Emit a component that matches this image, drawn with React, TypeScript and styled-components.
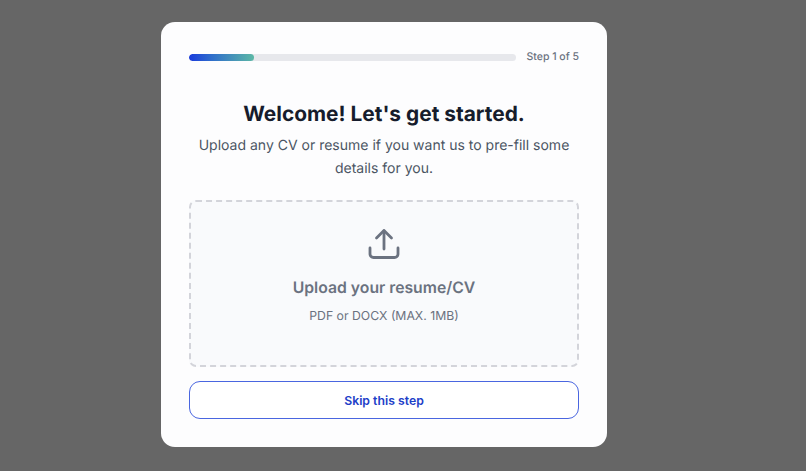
import React from "react";
import styled, { createGlobalStyle } from "styled-components";

const Global = createGlobalStyle`
  html, body { margin: 0; padding: 0; height: 100%; background: #666666; }
  body { font-family: Inter, "Liberation Sans", sans-serif; text-rendering: geometricPrecision; overflow: hidden; }
`;

const Page = styled.div`
  width: 768px;
  height: 471px;
  background: #666666;
  display: flex;
  justify-content: center;
  padding-top: 22px;
  box-sizing: border-box;
`;

const Card = styled.main`
  width: 446px;
  height: 425px;
  box-sizing: border-box;
  background: #fdfdfe;
  border-radius: 14px;
  padding: 28px;
  display: flex;
  flex-direction: column;
`;

const ProgressRow = styled.div`
  display: flex;
  align-items: center;
  gap: 11px;
  height: 14px;
`;

const Track = styled.div`
  flex: 1;
  height: 7px;
  border-radius: 4px;
  background: #e7e8ec;
  overflow: hidden;
`;

const Fill = styled.div`
  height: 100%;
  border-radius: 4px;
  background: linear-gradient(90deg, #1a3bdc 0%, #2f6ecb 35%, #5cb8a6 100%);
`;

const StepLabel = styled.span`
  font-size: 10.5px;
  font-weight: 500;
  line-height: 14px;
  color: #6b7280;
  white-space: nowrap;
`;

const Title = styled.h1`
  margin: 37px 0 0;
  font-family: Inter, sans-serif;
  font-size: 20.9px;
  font-weight: 700;
  line-height: 28px;
  color: #161c2c;
  text-align: center;
`;

const Lead = styled.p`
  margin: 5px auto 0;
  width: 385px;
  font-size: 14px;
  line-height: 23px;
  color: #4b5563;
  text-align: center;
`;

const Dropzone = styled.div`
  margin-top: 20px;
  height: 168px;
  box-sizing: border-box;
  border: 2px dashed #d3d4da;
  border-radius: 7px;
  background: #f9fafc;
  display: flex;
  flex-direction: column;
  align-items: center;
  padding-top: 26px;
`;

const UploadIcon = styled.svg`
  width: 32px;
  height: 32px;
  color: #6b7280;
  display: block;
`;

const DropTitle = styled.div`
  margin-top: 17px;
  font-size: 15.75px;
  font-weight: 600;
  line-height: 22px;
  color: #6b7280;
`;

const DropHint = styled.div`
  margin-top: 8px;
  font-size: 12.25px;
  line-height: 18px;
  color: #6b7280;
`;

const SkipButton = styled.button`
  margin-top: 14px;
  height: 38px;
  width: 100%;
  box-sizing: border-box;
  border: 1px solid #4a66e0;
  border-radius: 11px;
  background: #ffffff;
  color: #1d40c8;
  font-family: inherit;
  font-size: 12.25px;
  font-weight: 600;
  cursor: pointer;
`;

export default function App() {
  return (
    <Page>
      <Global />
      <Card>
        <ProgressRow>
          <Track>
            <Fill style={{ width: `${(1 / 5) * 100}%` }} />
          </Track>
          <StepLabel>Step 1 of 5</StepLabel>
        </ProgressRow>
        <Title>Welcome! Let's get started.</Title>
        <Lead>Upload any CV or resume if you want us to pre-fill some details for you.</Lead>
        <Dropzone>
          <UploadIcon viewBox="0 0 32 32" fill="none" stroke="currentColor" strokeWidth="2.8" strokeLinecap="round" strokeLinejoin="round">
            <path d="M16 21V3" />
            <path d="M8.5 10 16 2.5 23.5 10" />
            <path d="M2 20v6a3.5 3.5 0 0 0 3.5 3.5h21A3.5 3.5 0 0 0 30 26v-6" />
          </UploadIcon>
          <DropTitle>Upload your resume/CV</DropTitle>
          <DropHint>PDF or DOCX (MAX. 1MB)</DropHint>
        </Dropzone>
        <SkipButton>Skip this step</SkipButton>
      </Card>
    </Page>
  );
}
